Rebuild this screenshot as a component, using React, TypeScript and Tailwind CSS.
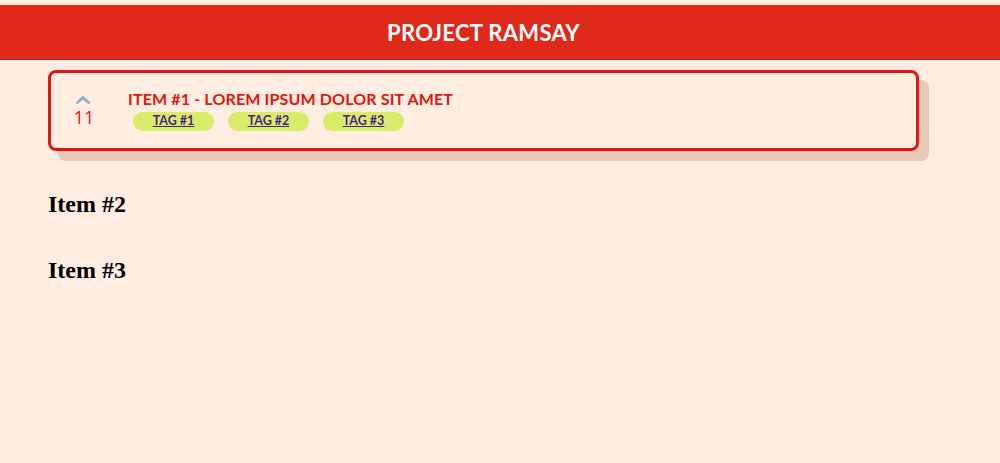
import React from "react";

const tags = ["TAG #1", "TAG #2", "TAG #3"];

function ItemCard() {
    return (
        <div className="flex items-center rounded-lg border-[3px] border-[#e0160f] bg-[#feede0] shadow-[10px_10px_0_#e9c9b4] h-[81px] pl-[21px] pr-6">
            {/* Vote */}
            <div className="flex flex-col items-center w-[24px] mt-[1px]">
                <svg width="14" height="9" viewBox="0 0 14 9" fill="none" className="-ml-[3px]">
                    <path d="M1.5 7.5 L7 2.5 L12.5 7.5" stroke="#92b1c9" strokeWidth="3" strokeLinecap="round" strokeLinejoin="round" />
                </svg>
                <span className="mt-[3px] text-[18px] leading-[20px] text-[#e0160f] font-['Open_Sans',sans-serif]">11</span>
            </div>

            <div className="flex flex-col ml-[32px] -mt-[1px]">
                <h3 className="text-[16px] leading-[20px] font-bold text-[#e0160f] font-['Lato',sans-serif] tracking-[0.15px]">
                    ITEM #1 - LOREM IPSUM DOLOR SIT AMET
                </h3>
                <div className="flex gap-[14px] ml-[5px] mt-[3px]">
                    {tags.map((t) => (
                        <a
                            key={t}
                            href="#"
                            className="flex items-center justify-center w-[81px] h-[19px] rounded-full bg-[#d8ec6a] text-[12.5px] font-bold text-[#4a1d8c] underline font-['Lato',sans-serif]"
                        >
                            {t}
                        </a>
                    ))}
                </div>
            </div>
        </div>
    );
}

export default function App() {
    return (
        <div className="min-h-[463px] bg-[#feede0] pt-[5px]">
            <header className="h-[55px] bg-[#de291b] border-b border-[#c81a10] flex items-center justify-center pr-[33px]">
                <h1 className="text-[22px] font-bold text-white tracking-[0.3px] font-['Lato',sans-serif]">
                    PROJECT RAMSAY
                </h1>
            </header>

            <main className="px-[48px] pt-[10px]">
                <div className="w-[871px]">
                    <ItemCard />
                </div>
                <h2 className="mt-[39px] text-[24px] leading-[28px] font-bold text-black font-['Liberation_Serif',serif]">Item #2</h2>
                <h2 className="mt-[38px] text-[24px] leading-[28px] font-bold text-black font-['Liberation_Serif',serif]">Item #3</h2>
            </main>
        </div>
    );
}
